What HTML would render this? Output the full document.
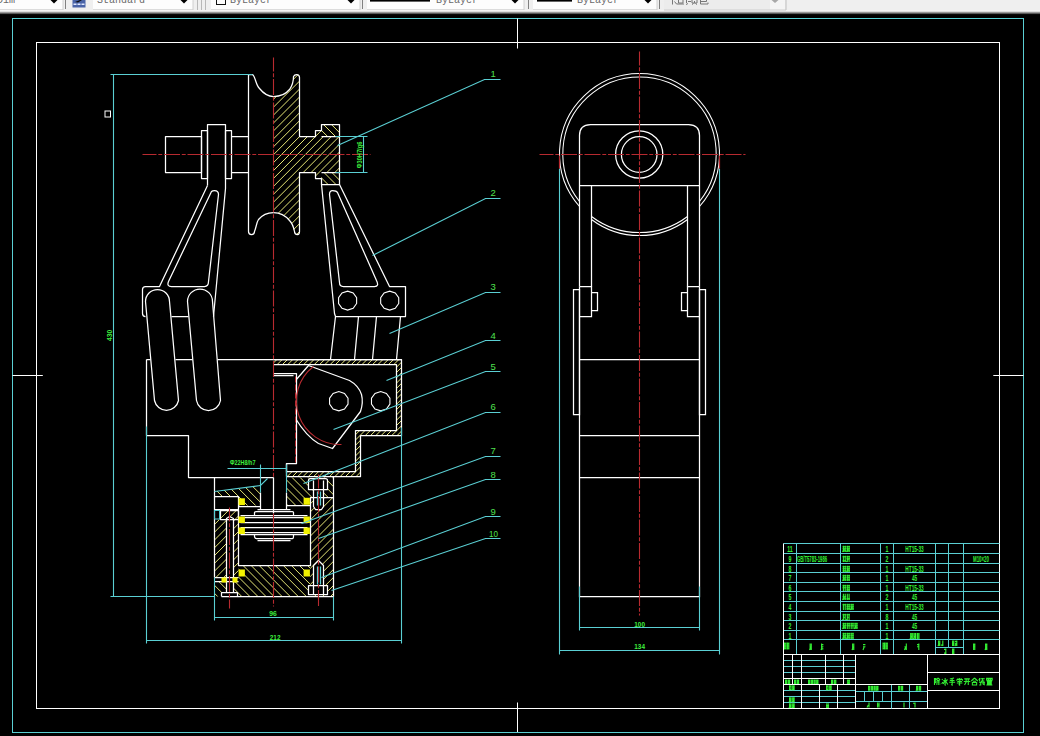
<!DOCTYPE html>
<html><head><meta charset="utf-8"><style>
html,body{margin:0;padding:0;background:#000;width:1040px;height:736px;overflow:hidden}
svg{display:block}
</style></head><body>
<svg width="1040" height="736" viewBox="0 0 1040 736">
<rect width="1040" height="736" fill="#000"/>
<g id="toolbar"><rect x="0" y="0" width="1040" height="14" fill="#efefef"/><rect x="0" y="10.5" width="1040" height="1" fill="#fbfbfb"/><rect x="0" y="11.5" width="1040" height="1" fill="#c8c8c8"/><rect x="0" y="12.5" width="1040" height="1" fill="#5a5a5a"/><rect x="0" y="13.5" width="1040" height="1" fill="#111"/><rect x="0" y="0" width="63" height="9" fill="#fdfdfd"/><line x1="0" y1="9.5" x2="63" y2="9.5" stroke="#dcdcdc" stroke-width="1"/><line x1="63" y1="0" x2="63" y2="10" stroke="#d0d0d0" stroke-width="1"/><path d="M50.5,0 L57.5,0 L54,3.5 Z" fill="#000"/><rect x="93" y="0" width="100" height="9" fill="#fdfdfd"/><line x1="93" y1="9.5" x2="193" y2="9.5" stroke="#dcdcdc" stroke-width="1"/><line x1="193" y1="0" x2="193" y2="10" stroke="#d0d0d0" stroke-width="1"/><path d="M180.5,0 L187.5,0 L184,3.5 Z" fill="#000"/><rect x="211" y="0" width="149" height="9" fill="#fdfdfd"/><line x1="211" y1="9.5" x2="360" y2="9.5" stroke="#dcdcdc" stroke-width="1"/><line x1="360" y1="0" x2="360" y2="10" stroke="#d0d0d0" stroke-width="1"/><path d="M347.5,0 L354.5,0 L351,3.5 Z" fill="#000"/><rect x="367" y="0" width="157" height="9" fill="#fdfdfd"/><line x1="367" y1="9.5" x2="524" y2="9.5" stroke="#dcdcdc" stroke-width="1"/><line x1="524" y1="0" x2="524" y2="10" stroke="#d0d0d0" stroke-width="1"/><path d="M511.5,0 L518.5,0 L515,3.5 Z" fill="#000"/><rect x="533" y="0" width="124" height="9" fill="#fdfdfd"/><line x1="533" y1="9.5" x2="657" y2="9.5" stroke="#dcdcdc" stroke-width="1"/><line x1="657" y1="0" x2="657" y2="10" stroke="#d0d0d0" stroke-width="1"/><path d="M644.5,0 L651.5,0 L648,3.5 Z" fill="#000"/><rect x="664" y="0" width="122" height="10" fill="#ececec"/><rect x="770" y="0" width="15" height="10" fill="#f4f4f4"/><line x1="664" y1="10" x2="786" y2="10" stroke="#cfcfcf"/><line x1="786" y1="0" x2="786" y2="10" stroke="#c0c0c0"/><path d="M771.5,0 L778.5,0 L775,3 Z" fill="#a8a8a8"/><line x1="65.5" y1="0" x2="65.5" y2="9" stroke="#808080" stroke-width="1"/><line x1="362.5" y1="0" x2="362.5" y2="9" stroke="#808080" stroke-width="1"/><line x1="528.5" y1="0" x2="528.5" y2="9" stroke="#808080" stroke-width="1"/><line x1="659.5" y1="0" x2="659.5" y2="9" stroke="#808080" stroke-width="1"/><line x1="197.5" y1="0" x2="197.5" y2="10" stroke="#b8b8b8" stroke-width="1"/><line x1="201.5" y1="0" x2="201.5" y2="10" stroke="#b8b8b8" stroke-width="1"/><line x1="205.5" y1="0" x2="205.5" y2="10" stroke="#b8b8b8" stroke-width="1"/><rect x="72.5" y="0" width="13" height="7.5" fill="#4a64a8"/><rect x="73.5" y="3.5" width="3" height="1.5" fill="#dfe8ff"/><rect x="77.5" y="3.5" width="3" height="1.5" fill="#dfe8ff"/><rect x="81.5" y="3.5" width="3" height="1.5" fill="#dfe8ff"/><path d="M75,2 L80,0 L82,0 L78,2.5Z" fill="#111"/><text x="-3" y="2.8" font-family="Liberation Mono" font-size="10" fill="#6a6a6a">Dim</text><text x="97" y="2.7" font-family="Liberation Mono" font-size="10" fill="#6a6a6a">Standard</text><text x="230" y="3.2" font-family="Liberation Mono" font-size="10" fill="#6a6a6a">ByLayer</text><text x="436" y="3.2" font-family="Liberation Mono" font-size="10" fill="#6a6a6a">ByLayer</text><text x="577" y="3.2" font-family="Liberation Mono" font-size="10" fill="#6a6a6a">ByLayer</text><rect x="216.5" y="-2" width="9" height="6.5" fill="none" stroke="#111" stroke-width="1"/><rect x="370" y="0" width="60" height="1.6" fill="#000"/><rect x="537" y="0" width="35" height="1.6" fill="#000"/><g stroke="#777" stroke-width="1" fill="none"><path d="M672.5,0 V4.5 M674.5,1.5 L676.5,4 H684 M678.5,0 V3 H683 V0 M686.5,0 V3 M688,1.5 H691 M686,4.5 L688,3.5 M692,0 V3 H697 V0 M694.5,1 V3 M692,4.5 L693.5,3.5 M697,4.5 L695.5,3.5 M700.5,0 V4 H708 V2.5 M700.5,1.5 H706.5 V0"/></g></g>
<rect x="12.5" y="18.5" width="1011" height="714" fill="none" stroke="#5acfd3" stroke-width="1"/><rect x="36.5" y="42.5" width="963" height="666" fill="none" stroke="#ffffff" stroke-width="1"/><line x1="517.5" y1="18.5" x2="517.5" y2="48.5" stroke="#ffffff" stroke-width="1"/><line x1="517.5" y1="702.5" x2="517.5" y2="732" stroke="#ffffff" stroke-width="1"/><line x1="12.5" y1="375.5" x2="42.8" y2="375.5" stroke="#ffffff" stroke-width="1"/><line x1="993.3" y1="375.5" x2="1023.5" y2="375.5" stroke="#ffffff" stroke-width="1"/>
<clipPath id="hc1"><path d="M273.3,96.3 C279,96.3 285,94 289,89.5 C292.5,85.5 293,79 293.6,76.5 Q294.3,74.1 296.5,74.1 Q299.4,74.1 299.4,77 L299.4,136 L315.5,136 L315.5,130.3 L321.2,130.3 L321.2,136.3 L339.7,136.3 L339.7,172.4 L321.2,172.4 L321.2,178.4 L315.5,178.4 L315.5,172.4 L299.4,172.4 L299.4,231.5 Q299.4,234.2 297,234.2 Q294.8,234.2 294,231 C293,226 292,223 289.5,220 C285,215 279,212.3 273.3,212.3 Z"/></clipPath>
<path clip-path="url(#hc1)" d="M95.12,238.00L265.12,68.00M103.04,238.00L273.04,68.00M110.96,238.00L280.96,68.00M118.88,238.00L288.88,68.00M126.80,238.00L296.80,68.00M134.72,238.00L304.72,68.00M142.64,238.00L312.64,68.00M150.56,238.00L320.56,68.00M158.48,238.00L328.48,68.00M166.40,238.00L336.40,68.00M174.32,238.00L344.32,68.00M182.24,238.00L352.24,68.00M190.16,238.00L360.16,68.00M198.08,238.00L368.08,68.00M206.00,238.00L376.00,68.00M213.92,238.00L383.92,68.00M221.84,238.00L391.84,68.00M229.76,238.00L399.76,68.00M237.68,238.00L407.68,68.00M245.60,238.00L415.60,68.00M253.51,238.00L423.51,68.00M261.43,238.00L431.43,68.00M269.35,238.00L439.35,68.00M277.27,238.00L447.27,68.00M285.19,238.00L455.19,68.00M293.11,238.00L463.11,68.00M301.03,238.00L471.03,68.00M308.95,238.00L478.95,68.00M316.87,238.00L486.87,68.00M324.79,238.00L494.79,68.00M332.71,238.00L502.71,68.00" stroke="#f2f27c" stroke-width="0.95" fill="none"/>
<clipPath id="hc2"><path d="M321.2,124.4 H339.7 V136.3 H321.2 Z M321.2,172.4 H339.7 V184.4 H321.2 Z"/></clipPath>
<path clip-path="url(#hc2)" d="M245.71,118.00L315.71,188.00M253.63,118.00L323.63,188.00M261.55,118.00L331.55,188.00M269.47,118.00L339.47,188.00M277.39,118.00L347.39,188.00M285.31,118.00L355.31,188.00M293.23,118.00L363.23,188.00M301.15,118.00L371.15,188.00M309.07,118.00L379.07,188.00M316.99,118.00L386.99,188.00M324.91,118.00L394.91,188.00M332.83,118.00L402.83,188.00" stroke="#f2f27c" stroke-width="0.95" fill="none"/>
<clipPath id="hc3"><path d="M273,359.2 L401.9,359.2 L401.9,435.1 L360.4,435.1 L360.4,476.9 L286.3,476.9 L286.3,471.9 L355.1,471.9 L355.1,430.4 L396.6,430.4 L396.6,364.5 L273,364.5 Z"/></clipPath>
<path clip-path="url(#hc3)" d="M138.49,482.00L267.49,353.00M143.79,482.00L272.79,353.00M149.09,482.00L278.09,353.00M154.40,482.00L283.40,353.00M159.70,482.00L288.70,353.00M165.00,482.00L294.00,353.00M170.31,482.00L299.31,353.00M175.61,482.00L304.61,353.00M180.91,482.00L309.91,353.00M186.22,482.00L315.22,353.00M191.52,482.00L320.52,353.00M196.82,482.00L325.82,353.00M202.13,482.00L331.13,353.00M207.43,482.00L336.43,353.00M212.73,482.00L341.73,353.00M218.04,482.00L347.04,353.00M223.34,482.00L352.34,353.00M228.64,482.00L357.64,353.00M233.95,482.00L362.95,353.00M239.25,482.00L368.25,353.00M244.55,482.00L373.55,353.00M249.86,482.00L378.86,353.00M255.16,482.00L384.16,353.00M260.46,482.00L389.46,353.00M265.77,482.00L394.77,353.00M271.07,482.00L400.07,353.00M276.37,482.00L405.37,353.00M281.68,482.00L410.68,353.00M286.98,482.00L415.98,353.00M292.28,482.00L421.28,353.00M297.59,482.00L426.59,353.00M302.89,482.00L431.89,353.00M308.19,482.00L437.19,353.00M313.50,482.00L442.50,353.00M318.80,482.00L447.80,353.00M324.10,482.00L453.10,353.00M329.41,482.00L458.41,353.00M334.71,482.00L463.71,353.00M340.01,482.00L469.01,353.00M345.31,482.00L474.31,353.00M350.62,482.00L479.62,353.00M355.92,482.00L484.92,353.00M361.22,482.00L490.22,353.00M366.53,482.00L495.53,353.00M371.83,482.00L500.83,353.00M377.13,482.00L506.13,353.00M382.44,482.00L511.44,353.00M387.74,482.00L516.74,353.00M393.04,482.00L522.04,353.00M398.35,482.00L527.35,353.00" stroke="#f2f27c" stroke-width="0.95" fill="none"/>
<clipPath id="hc4"><path d="M214.7,491.2 L260,485 L260.6,484.9 L260.6,505.5 L238.6,505.5 L238.6,496.3 L214.7,496.3 Z"/></clipPath>
<path clip-path="url(#hc4)" d="M174.74,473.00L211.74,510.00M182.80,473.00L219.80,510.00M190.86,473.00L227.86,510.00M198.93,473.00L235.93,510.00M206.99,473.00L243.99,510.00M215.05,473.00L252.05,510.00M223.11,473.00L260.11,510.00M231.17,473.00L268.17,510.00M239.23,473.00L276.23,510.00M247.29,473.00L284.29,510.00M255.35,473.00L292.35,510.00M263.41,473.00L300.41,510.00" stroke="#f2f27c" stroke-width="0.95" fill="none"/>
<clipPath id="hc5"><path d="M286.4,477.4 L333.7,477.4 L333.7,497 L310.3,497 L310.3,505.5 L286.3,505.5 Z"/></clipPath>
<path clip-path="url(#hc5)" d="M247.29,473.00L284.29,510.00M255.35,473.00L292.35,510.00M263.41,473.00L300.41,510.00M271.47,473.00L308.47,510.00M279.54,473.00L316.54,510.00M287.60,473.00L324.60,510.00M295.66,473.00L332.66,510.00M303.72,473.00L340.72,510.00M311.78,473.00L348.78,510.00M319.84,473.00L356.84,510.00M327.90,473.00L364.90,510.00" stroke="#f2f27c" stroke-width="0.95" fill="none"/>
<clipPath id="hc6"><path d="M310.3,497 L333.7,497 L333.7,596.4 L310.3,596.4 Z"/></clipPath>
<path clip-path="url(#hc6)" d="M198.04,600.00L305.04,493.00M206.10,600.00L313.10,493.00M214.16,600.00L321.16,493.00M222.22,600.00L329.22,493.00M230.28,600.00L337.28,493.00M238.35,600.00L345.35,493.00M246.41,600.00L353.41,493.00M254.47,600.00L361.47,493.00M262.53,600.00L369.53,493.00M270.59,600.00L377.59,493.00M278.65,600.00L385.65,493.00M286.71,600.00L393.71,493.00M294.77,600.00L401.77,493.00M302.83,600.00L409.83,493.00M310.89,600.00L417.89,493.00M318.96,600.00L425.96,493.00M327.02,600.00L434.02,493.00" stroke="#f2f27c" stroke-width="0.95" fill="none"/>
<clipPath id="hc7"><path d="M238.6,565.3 L310.3,565.3 L310.3,596.4 L238.6,596.4 Z M214.7,581.6 H238.6 V596.4 H214.7 Z"/></clipPath>
<path clip-path="url(#hc7)" d="M174.07,561.00L213.07,600.00M182.13,561.00L221.13,600.00M190.19,561.00L229.19,600.00M198.25,561.00L237.25,600.00M206.32,561.00L245.32,600.00M214.38,561.00L253.38,600.00M222.44,561.00L261.44,600.00M230.50,561.00L269.50,600.00M238.56,561.00L277.56,600.00M246.62,561.00L285.62,600.00M254.68,561.00L293.68,600.00M262.74,561.00L301.74,600.00M270.80,561.00L309.80,600.00M278.86,561.00L317.86,600.00M286.93,561.00L325.93,600.00M294.99,561.00L333.99,600.00M303.05,561.00L342.05,600.00" stroke="#f2f27c" stroke-width="0.95" fill="none"/>
<clipPath id="hc8"><path d="M214.7,519.2 L238.6,519.2 L238.6,577.5 L214.7,577.5 Z M220.9,510.4 H238.3 V519.2 H220.9 Z"/></clipPath>
<path clip-path="url(#hc8)" d="M133.59,582.00L209.59,506.00M141.37,582.00L217.37,506.00M149.15,582.00L225.15,506.00M156.93,582.00L232.93,506.00M164.70,582.00L240.70,506.00M172.48,582.00L248.48,506.00M180.26,582.00L256.26,506.00M188.04,582.00L264.04,506.00M195.82,582.00L271.82,506.00M203.60,582.00L279.60,506.00M211.37,582.00L287.37,506.00M219.15,582.00L295.15,506.00M226.93,582.00L302.93,506.00M234.71,582.00L310.71,506.00" stroke="#f2f27c" stroke-width="0.95" fill="none"/>
<g fill="#000" stroke="none">
<path d="M226.5 592.5V518.5L229.5 516.5L233.5 518.5V592.5ZM221.5 596.5V592.5H237.5V596.5Z"/>
<path d="M308.5 489.5V480.5Q308.5 478.5 310.5 478.5H325.5Q327.5 478.5 327.5 480.5V489.5ZM313.5 489.5V506.5L315.5 509.5H321.5L323.5 506.5V489.5Z"/>
<path d="M313.5 585.5V565.5L318.5 560.5L323.5 565.5V585.5ZM308.5 585.5H327.5V594.5H308.5Z"/>
<path d="M214.5 496.5H238.5V509.5H214.5ZM214.5 510.5H220.5V519.5H214.5Z"/>
</g>
<g fill="none" stroke="#ffffff" stroke-width="1.25" stroke-linejoin="round">
<!-- pulley outline -->
<path d="M248.5 231.5V74.5H252.5C255.5 76.5 255.5 84.5 259.5 88.5C263.5 93.5 268.5 96.5 273.5 96.5C279.5 96.5 285.5 94.5 289.5 89.5C292.5 85.5 293.5 79.5 293.5 76.5Q294.5 74.5 296.5 74.5Q299.5 74.5 299.5 77.5L299.5 136.5L315.5 136.5L315.5 130.5L321.5 130.5L321.5 124.5L339.5 124.5L339.5 184.5L321.5 184.5L321.5 178.5L315.5 178.5L315.5 172.5L299.5 172.5L299.5 231.5Q299.5 234.5 297.5 234.5Q294.5 234.5 294.5 231.5C293.5 226.5 292.5 223.5 289.5 220.5C285.5 215.5 279.5 212.5 273.5 212.5C268.5 212.5 262.5 214.5 258.5 219.5C256.5 222.5 256.5 226.5 254.5 231.5Q254.5 234.5 251.5 234.5Q248.5 234.5 248.5 231.5Z"/>
<path d="M321.5 136.5H339.5M321.5 172.5H339.5"/>
<!-- left shaft -->
<path d="M165.5 136.5H201.5V172.5H165.5Z"/>
<path d="M201.5 130.5H207.5V178.5H201.5Z"/>
<path d="M225.5 130.5H231.5V178.5H225.5Z"/>
<path d="M231.5 136.5H248.5M231.5 172.5H248.5"/>
<!-- left arm -->
<path d="M207.5 185.5V124.5H225.5V188.5L213.5 316.5"/>
<path d="M207.5 185.5L159.5 286.5H145.5Q142.5 286.5 142.5 289.5V313.5Q142.5 316.5 145.5 316.5"/>
<path d="M214.5 190.5Q218.5 190.5 218.5 194.5L208.5 281.5Q208.5 286.5 204.5 286.5H171.5Q166.5 286.5 168.5 281.5L211.5 191.5Q212.5 190.5 214.5 190.5Z"/>
<!-- fingers -->
<path d="M145.5 301.5A12 12 0 0 1 169.5 301.5L178.5 400.5A12.25 12.25 0 0 1 154.5 400.5Z"/>
<path d="M187.5 301.5A12.25 12.25 0 0 1 212.5 301.5L220.5 400.5A12.2 12.2 0 0 1 196.5 400.5Z"/>
<path d="M171.5 316.5H188.5M175.5 359.5H192.5M217.5 359.5H401.5M146.5 359.5H150.5"/>
<!-- body -->
<path d="M146.5 359.5V435.5H188.5V477.5H273.5"/>
<path d="M273.5 373.5H296.5V463.5H286.5V476.5M273.5 375.5H293.5"/>
<!-- right arm -->
<path d="M321.5 184.5L334.5 313.5L335.5 316.5L330.5 359.5"/>
<path d="M339.5 184.5L389.5 286.5H405.5V316.5H335.5"/>
<path d="M332.5 190.5Q336.5 190.5 337.5 192.5L376.5 280.5Q379.5 286.5 374.5 286.5H343.5Q339.5 286.5 339.5 282.5L329.5 194.5Q329.5 190.5 332.5 190.5Z"/>
<path d="M358.5 316.5L354.5 359.5M376.5 316.5L372.5 359.5M400.5 316.5L396.5 359.5"/>
<!-- housing outline -->
<path d="M273.5 359.5L401.5 359.5L401.5 435.5L360.5 435.5L360.5 476.5L286.5 476.5"/>
<path d="M273.5 364.5L396.5 364.5L396.5 430.5L355.5 430.5L355.5 471.5L286.5 471.5"/>
<!-- cam -->
<path d="M308.5 365.5L349.5 380.5Q358.5 385.5 361.5 394.5Q363.5 402.5 360.5 411.5L332.5 448.5L318.5 443.5Q306.5 436.5 295.5 418.5M308.5 365.5L295.5 380.5"/>
<!-- lower housing -->
<path d="M214.5 477.5V577.5M221.5 596.5H333.5V476.5"/>
<path d="M260.5 492.5V509.5M286.5 463.5V472.5M286.5 492.5V509.5"/>
<path d="M214.5 496.5H238.5V565.5H310.5V497.5H333.5"/>
<path d="M214.5 509.5H238.5M220.5 510.5H238.5V519.5H220.5Z"/>
<path d="M238.5 506.5H260.5M286.5 505.5H310.5"/>
<path d="M257.5 509.5H290.5M254.5 515.5V512.5Q254.5 511.5 256.5 511.5H292.5Q293.5 511.5 293.5 512.5V515.5"/>
<path d="M240.5 515.5H307.5M240.5 517.5H307.5M240.5 522.5H307.5M240.5 527.5H307.5M240.5 532.5H307.5M240.5 534.5H307.5"/>
<path d="M254.5 534.5V536.5Q254.5 538.5 256.5 538.5H292.5Q293.5 538.5 293.5 536.5V534.5M257.5 540.5H290.5"/>
<path d="M226.5 592.5V518.5L229.5 516.5L233.5 518.5V592.5M221.5 596.5V592.5H237.5V596.5"/>
<path d="M214.5 577.5H238.5M214.5 581.5H238.5"/>
<path d="M273.5 477.5V513.5"/>
<path d="M308.5 489.5V480.5Q308.5 478.5 310.5 478.5H325.5Q327.5 478.5 327.5 480.5V489.5ZM313.5 480.5V489.5M323.5 480.5V489.5M313.5 489.5V506.5L315.5 509.5H321.5L323.5 506.5V489.5"/>
<path d="M317.5 491.5V505.5M320.5 491.5V505.5" stroke="#5acfd3"/>
<path d="M313.5 585.5V565.5L318.5 560.5L323.5 565.5V585.5M308.5 585.5H327.5V594.5H308.5ZM313.5 585.5V594.5M323.5 585.5V594.5"/>
<path d="M317.5 566.5V584.5M320.5 566.5V584.5" stroke="#5acfd3"/>
</g>
<!-- holes -->
<g fill="none" stroke="#fff" stroke-width="1.1">
<polygon points="356.62,303.53 353.18,308.27 347.60,310.09 342.02,308.27 338.58,303.53 338.58,297.67 342.02,292.93 347.60,291.11 353.18,292.93 356.62,297.67"/>
<polygon points="398.72,303.53 395.28,308.27 389.70,310.09 384.12,308.27 380.68,303.53 380.68,297.67 384.12,292.93 389.70,291.11 395.28,292.93 398.72,297.67"/>
<polygon points="348.02,404.19 344.50,409.04 338.80,410.89 333.10,409.04 329.58,404.19 329.58,398.21 333.10,393.36 338.80,391.51 344.50,393.36 348.02,398.21"/>
<polygon points="389.92,404.19 386.40,409.04 380.70,410.89 375.00,409.04 371.48,404.19 371.48,398.21 375.00,393.36 380.70,391.51 386.40,393.36 389.92,398.21"/>
</g>
<!-- yellow squares -->
<g fill="#f2f200">
<rect x="238.6" y="498.3" width="6.3" height="6.8"/>
<rect x="303.6" y="497.8" width="6.3" height="7"/>
<rect x="238.6" y="516.5" width="6.3" height="6.5"/>
<rect x="303.6" y="516.5" width="6.3" height="6.5"/>
<rect x="238.6" y="527.5" width="6.3" height="6.5"/>
<rect x="303.6" y="527.5" width="6.3" height="6.5"/>
<rect x="238.6" y="569.5" width="6.3" height="7"/>
<rect x="303.6" y="569.5" width="6.3" height="7"/>
<rect x="221.5" y="577.5" width="5" height="5"/>
<rect x="232.5" y="577.5" width="5" height="5"/>
</g>
<!-- red center lines -->
<g stroke="#b82a30" stroke-width="1.1" fill="none" stroke-dasharray="16,1.8,3.9,1.8" stroke-dashoffset="2">
<line x1="273.5" y1="57.5" x2="273.5" y2="477.5"/>
<line x1="273.5" y1="513.5" x2="273.5" y2="606.5"/>
<line x1="142.5" y1="154.5" x2="370.5" y2="154.5"/>
<line x1="229.5" y1="507.5" x2="229.5" y2="608.5"/>
<line x1="318.5" y1="474.5" x2="318.5" y2="606.5"/>
</g>
<path d="M313.5 366.5A43.45 43.45 0 0 0 341.5 444.5" fill="none" stroke="#b82a30" stroke-width="1.1"/>
<line x1="295.5" y1="376.5" x2="295.5" y2="462.5" stroke="#b82a30" stroke-width="1" stroke-dasharray="6,2"/>
<!-- cyan dimensions & leaders -->
<g stroke="#5acfd3" stroke-width="1.1" fill="none">
<path d="M110.5 74.5H252.5M113.5 74.5V596.5M110.5 596.5H214.5"/>
<path d="M146.5 426.5V643.5M401.5 427.5V643.5M146.5 640.5H401.5"/>
<path d="M214.5 577.5V620.5M333.5 596.5V620.5M214.5 617.5H333.5"/>
<path d="M227.5 468.5H286.5M260.5 464.5V492.5M286.5 464.5V492.5"/>
<path d="M214.5 491.5L260.5 485.5L267.5 478.5"/>
<path d="M335.5 136.5H367.5M335.5 172.5H367.5M363.5 136.5V172.5"/>
<path d="M337.5 145.5L484.5 79.5H500.5"/>
<path d="M372.5 255.5L485.5 198.5H500.5"/>
<path d="M389.5 333.5L485.5 292.5H500.5"/>
<path d="M386.5 380.5L485.5 340.5H500.5"/>
<path d="M333.5 429.5L485.5 371.5H500.5"/>
<path d="M303.5 483.5L485.5 412.5H500.5"/>
<path d="M301.5 523.5L485.5 456.5H500.5"/>
<path d="M318.5 538.5L485.5 479.5H500.5"/>
<path d="M321.5 577.5L485.5 516.5H500.5"/>
<path d="M331.5 590.5L485.5 538.5H500.5"/>
</g>
<rect x="214.5" y="510.5" width="5" height="8.5" fill="none" stroke="#5acfd3" stroke-width="1"/>
<rect x="105" y="111" width="5.5" height="6" fill="none" stroke="#fff" stroke-width="1"/>
<!-- green texts -->
<g fill="#4fe04f" font-family="Liberation Sans" font-size="9.5">
<text x="490.5" y="77.3">1</text>
<text x="490.5" y="196.3">2</text>
<text x="490.5" y="290.3">3</text>
<text x="490.5" y="338.6">4</text>
<text x="490.5" y="369.6">5</text>
<text x="490.5" y="410.3">6</text>
<text x="490.5" y="454.3">7</text>
<text x="490.5" y="477.5">8</text>
<text x="490.5" y="514.6">9</text>
<text x="489" y="536.6" transform="translate(489,536.6) scale(0.85,1) translate(-489,-536.6)">10</text>
</g>
<g fill="#3ef03e" font-family="Liberation Sans" font-size="7.5" font-weight="bold">
<text x="269.3" y="616.3" transform="translate(269.3,616.3) scale(0.9,1) translate(-269.3,-616.3)">96</text>
<text x="269.8" y="639.8" transform="translate(269.8,639.8) scale(0.85,1) translate(-269.8,-639.8)">212</text>
<text transform="translate(112.3,341) rotate(-90) scale(0.9,1)">430</text>
</g>
<g fill="#3ef03e" font-family="Liberation Sans" font-size="7" font-weight="bold">
<text x="0" y="0" transform="translate(230,464.8)" font-size="7.8" textLength="25.5" lengthAdjust="spacingAndGlyphs">Φ22H8/h7</text>
<text x="0" y="0" transform="translate(361.9,168.2) rotate(-90)" font-size="8" textLength="26.5" lengthAdjust="spacingAndGlyphs">Φ30H7/g6</text>
</g>

<g fill="none" stroke="#ffffff" stroke-width="1.25">
<!-- outer circles (upper part + sides) -->
<path d="M579.5 206.5A80 80 0 1 1 699.5 206.5" stroke-width="1.05"/>
<path d="M579.5 201.5A76.7 76.7 0 1 1 699.5 201.5" stroke-width="1.05"/>
<!-- lower arcs between arms -->
<path d="M591.5 216.5A79.8 79.8 0 0 0 687.5 216.5" stroke-width="1.05"/>
<path d="M591.5 219.5A79.8 79.8 0 0 0 687.5 219.5" stroke-width="1.05"/>
<!-- cap -->
<path d="M579.5 286.5V135.5Q579.5 124.5 590.5 124.5H688.5Q699.5 124.5 699.5 135.5V286.5"/>
<path d="M579.5 185.5H699.5M591.5 185.5V286.5M687.5 185.5V286.5"/>
<circle cx="639.2" cy="154.5" r="23.6"/>
<circle cx="639.2" cy="154.5" r="17.8"/>
<!-- arm blocks & tabs -->
<path d="M579.5 286.5H591.5V316.5H579.5M591.5 292.5H597.5V310.5H591.5"/>
<path d="M699.5 286.5H687.5V316.5H699.5M687.5 292.5H681.5V310.5H687.5"/>
<path d="M573.5 289.5H579.5V414.5H573.5ZM699.5 289.5H705.5V414.5H699.5Z"/>
<!-- body -->
<path d="M579.5 286.5V596.5H699.5V286.5"/>
<path d="M579.5 359.5H699.5M579.5 435.5H699.5M579.5 477.5H699.5"/>
</g>
<g stroke="#b82a30" stroke-width="1.1" fill="none" stroke-dasharray="16,1.8,3.9,1.8" stroke-dashoffset="2">
<line x1="639.5" y1="51.5" x2="639.5" y2="615.5"/>
<line x1="539.5" y1="154.5" x2="745.5" y2="154.5"/>
</g>
<g stroke="#5acfd3" stroke-width="1.1" fill="none">
<path d="M559.5 168.5V654.5M719.5 168.5V654.5M559.5 650.5H719.5"/>
<path d="M579.5 586.5V630.5M699.5 586.5V630.5M579.5 627.5H699.5"/>
</g>
<path d="M559.5 155.5V168.5M719.5 155.5V168.5" stroke="#b82a30" stroke-width="1.2"/>
<g fill="#3ef03e" font-family="Liberation Sans" font-size="7.5" font-weight="bold">
<text transform="translate(634.3,626.8) scale(0.85,1)">100</text>
<text transform="translate(634.3,649.4) scale(0.85,1)">134</text>
</g>

<g shape-rendering="auto"><line x1="783.5" y1="543.5" x2="999.5" y2="543.5" stroke="#5acfd3" stroke-width="1"/>
<line x1="783.5" y1="553.5" x2="999.5" y2="553.5" stroke="#5acfd3" stroke-width="1"/>
<line x1="783.5" y1="563.5" x2="999.5" y2="563.5" stroke="#5acfd3" stroke-width="1"/>
<line x1="783.5" y1="572.5" x2="999.5" y2="572.5" stroke="#5acfd3" stroke-width="1"/>
<line x1="783.5" y1="582.5" x2="999.5" y2="582.5" stroke="#5acfd3" stroke-width="1"/>
<line x1="783.5" y1="591.5" x2="999.5" y2="591.5" stroke="#5acfd3" stroke-width="1"/>
<line x1="783.5" y1="601.5" x2="999.5" y2="601.5" stroke="#5acfd3" stroke-width="1"/>
<line x1="783.5" y1="611.5" x2="999.5" y2="611.5" stroke="#5acfd3" stroke-width="1"/>
<line x1="783.5" y1="620.5" x2="999.5" y2="620.5" stroke="#5acfd3" stroke-width="1"/>
<line x1="783.5" y1="630.5" x2="999.5" y2="630.5" stroke="#5acfd3" stroke-width="1"/>
<line x1="783.5" y1="639.5" x2="999.5" y2="639.5" stroke="#5acfd3" stroke-width="1"/>
<line x1="796.5" y1="543.5" x2="796.5" y2="654.5" stroke="#5acfd3" stroke-width="1"/>
<line x1="840.5" y1="543.5" x2="840.5" y2="654.5" stroke="#5acfd3" stroke-width="1"/>
<line x1="880.5" y1="543.5" x2="880.5" y2="654.5" stroke="#5acfd3" stroke-width="1"/>
<line x1="893.5" y1="543.5" x2="893.5" y2="654.5" stroke="#5acfd3" stroke-width="1"/>
<line x1="935.5" y1="543.5" x2="935.5" y2="654.5" stroke="#5acfd3" stroke-width="1"/>
<line x1="948.5" y1="543.5" x2="948.5" y2="647.5" stroke="#5acfd3" stroke-width="1"/>
<line x1="963.5" y1="543.5" x2="963.5" y2="654.5" stroke="#5acfd3" stroke-width="1"/>
<line x1="935.5" y1="647.5" x2="963.5" y2="647.5" stroke="#5acfd3" stroke-width="1"/>
<text transform="translate(790,551.5999999999999) scale(0.62,1)" text-anchor="middle" font-family="Liberation Sans" font-size="8.4" font-weight="bold" fill="#33f033">11</text>
<text transform="translate(887,551.5999999999999) scale(0.62,1)" text-anchor="middle" font-family="Liberation Sans" font-size="8.4" font-weight="bold" fill="#33f033">1</text>
<text transform="translate(914.5,551.5999999999999) scale(0.56,1)" text-anchor="middle" font-family="Liberation Sans" font-size="8.4" font-weight="bold" fill="#33f033">HT15-33</text>
<path d="M842.5,546.7h3.6 M842.5,548.8h3.6 M842.5,550.9h3.6 M843.4,545.7v6.2 M845.2,545.7v6.2 M842.5,551.9l1.8,-3.1" stroke="#33f033" stroke-width="1.1" fill="none"/>
<path d="M846.4,546.7h3.6 M846.4,548.8h3.6 M846.4,550.9h3.6 M847.3,545.7v6.2 M849.1,545.7v6.2 M846.4,551.9l1.8,-3.1" stroke="#33f033" stroke-width="1.1" fill="none"/>
<text transform="translate(790,561.5999999999999) scale(0.62,1)" text-anchor="middle" font-family="Liberation Sans" font-size="8.4" font-weight="bold" fill="#33f033">9</text>
<text transform="translate(887,561.5999999999999) scale(0.62,1)" text-anchor="middle" font-family="Liberation Sans" font-size="8.4" font-weight="bold" fill="#33f033">2</text>
<path d="M842.5,556.7h3.6 M842.5,560.9h3.6 M843.4,555.7v6.2 M845.2,555.7v6.2" stroke="#33f033" stroke-width="1.1" fill="none"/>
<path d="M846.4,556.7h3.6 M846.4,558.8h3.6 M847.3,555.7v6.2 M849.1,555.7v6.2 M846.4,561.9l1.8,-3.1" stroke="#33f033" stroke-width="1.1" fill="none"/>
<text transform="translate(790,571.5999999999999) scale(0.62,1)" text-anchor="middle" font-family="Liberation Sans" font-size="8.4" font-weight="bold" fill="#33f033">8</text>
<text transform="translate(887,571.5999999999999) scale(0.62,1)" text-anchor="middle" font-family="Liberation Sans" font-size="8.4" font-weight="bold" fill="#33f033">1</text>
<text transform="translate(914.5,571.5999999999999) scale(0.56,1)" text-anchor="middle" font-family="Liberation Sans" font-size="8.4" font-weight="bold" fill="#33f033">HT15-33</text>
<path d="M842.5,566.7h3.6 M842.5,568.8h3.6 M842.5,570.9h3.6 M843.4,565.7v6.2 M845.2,565.7v6.2" stroke="#33f033" stroke-width="1.1" fill="none"/>
<path d="M846.4,566.7h3.6 M846.4,568.8h3.6 M846.4,570.9h3.6 M847.3,565.7v6.2 M849.1,565.7v6.2 M846.4,571.9l1.8,-3.1" stroke="#33f033" stroke-width="1.1" fill="none"/>
<text transform="translate(790,580.5999999999999) scale(0.62,1)" text-anchor="middle" font-family="Liberation Sans" font-size="8.4" font-weight="bold" fill="#33f033">7</text>
<text transform="translate(887,580.5999999999999) scale(0.62,1)" text-anchor="middle" font-family="Liberation Sans" font-size="8.4" font-weight="bold" fill="#33f033">1</text>
<text transform="translate(914.5,580.5999999999999) scale(0.56,1)" text-anchor="middle" font-family="Liberation Sans" font-size="8.4" font-weight="bold" fill="#33f033">45</text>
<path d="M842.5,575.7h3.6 M842.5,577.8h3.6 M842.5,579.9h3.6 M843.4,574.7v6.2 M845.2,574.7v6.2 M842.5,580.9l1.8,-3.1" stroke="#33f033" stroke-width="1.1" fill="none"/>
<path d="M846.4,575.7h3.6 M846.4,577.8h3.6 M846.4,579.9h3.6 M847.3,574.7v6.2 M849.1,574.7v6.2" stroke="#33f033" stroke-width="1.1" fill="none"/>
<text transform="translate(790,590.5999999999999) scale(0.62,1)" text-anchor="middle" font-family="Liberation Sans" font-size="8.4" font-weight="bold" fill="#33f033">6</text>
<text transform="translate(887,590.5999999999999) scale(0.62,1)" text-anchor="middle" font-family="Liberation Sans" font-size="8.4" font-weight="bold" fill="#33f033">1</text>
<text transform="translate(914.5,590.5999999999999) scale(0.56,1)" text-anchor="middle" font-family="Liberation Sans" font-size="8.4" font-weight="bold" fill="#33f033">HT15-33</text>
<path d="M842.5,585.7h3.6 M842.5,587.8h3.6 M843.4,584.7v6.2 M845.2,584.7v6.2" stroke="#33f033" stroke-width="1.1" fill="none"/>
<path d="M846.4,585.7h3.6 M846.4,587.8h3.6 M846.4,589.9h3.6 M847.3,584.7v6.2 M849.1,584.7v6.2" stroke="#33f033" stroke-width="1.1" fill="none"/>
<text transform="translate(790,599.5999999999999) scale(0.62,1)" text-anchor="middle" font-family="Liberation Sans" font-size="8.4" font-weight="bold" fill="#33f033">5</text>
<text transform="translate(887,599.5999999999999) scale(0.62,1)" text-anchor="middle" font-family="Liberation Sans" font-size="8.4" font-weight="bold" fill="#33f033">2</text>
<text transform="translate(914.5,599.5999999999999) scale(0.56,1)" text-anchor="middle" font-family="Liberation Sans" font-size="8.4" font-weight="bold" fill="#33f033">45</text>
<path d="M842.5,596.8h3.6 M842.5,598.9h3.6 M843.4,593.7v6.2 M845.2,593.7v6.2 M842.5,599.9l1.8,-3.1" stroke="#33f033" stroke-width="1.1" fill="none"/>
<path d="M846.4,598.9h3.6 M847.3,593.7v6.2 M849.1,593.7v6.2" stroke="#33f033" stroke-width="1.1" fill="none"/>
<text transform="translate(790,609.5999999999999) scale(0.62,1)" text-anchor="middle" font-family="Liberation Sans" font-size="8.4" font-weight="bold" fill="#33f033">4</text>
<text transform="translate(887,609.5999999999999) scale(0.62,1)" text-anchor="middle" font-family="Liberation Sans" font-size="8.4" font-weight="bold" fill="#33f033">1</text>
<text transform="translate(914.5,609.5999999999999) scale(0.56,1)" text-anchor="middle" font-family="Liberation Sans" font-size="8.4" font-weight="bold" fill="#33f033">HT15-33</text>
<path d="M842.5,604.7h3.6 M843.4,603.7v6.2 M845.2,603.7v6.2" stroke="#33f033" stroke-width="1.1" fill="none"/>
<path d="M846.4,604.7h3.6 M846.4,606.8h3.6 M846.4,608.9h3.6 M847.3,603.7v6.2 M849.1,603.7v6.2" stroke="#33f033" stroke-width="1.1" fill="none"/>
<path d="M850.3,604.7h3.6 M850.3,606.8h3.6 M850.3,608.9h3.6 M851.2,603.7v6.2 M853.0,603.7v6.2 M850.3,609.9l1.8,-3.1" stroke="#33f033" stroke-width="1.1" fill="none"/>
<text transform="translate(790,619.5999999999999) scale(0.62,1)" text-anchor="middle" font-family="Liberation Sans" font-size="8.4" font-weight="bold" fill="#33f033">3</text>
<text transform="translate(887,619.5999999999999) scale(0.62,1)" text-anchor="middle" font-family="Liberation Sans" font-size="8.4" font-weight="bold" fill="#33f033">8</text>
<text transform="translate(914.5,619.5999999999999) scale(0.56,1)" text-anchor="middle" font-family="Liberation Sans" font-size="8.4" font-weight="bold" fill="#33f033">45</text>
<path d="M842.5,614.7h3.6 M843.4,613.7v6.2 M845.2,613.7v6.2 M842.5,619.9l1.8,-3.1" stroke="#33f033" stroke-width="1.1" fill="none"/>
<path d="M846.4,614.7h3.6 M847.3,613.7v6.2 M849.1,613.7v6.2 M846.4,619.9l1.8,-3.1" stroke="#33f033" stroke-width="1.1" fill="none"/>
<text transform="translate(790,628.5999999999999) scale(0.62,1)" text-anchor="middle" font-family="Liberation Sans" font-size="8.4" font-weight="bold" fill="#33f033">2</text>
<text transform="translate(887,628.5999999999999) scale(0.62,1)" text-anchor="middle" font-family="Liberation Sans" font-size="8.4" font-weight="bold" fill="#33f033">1</text>
<text transform="translate(914.5,628.5999999999999) scale(0.56,1)" text-anchor="middle" font-family="Liberation Sans" font-size="8.4" font-weight="bold" fill="#33f033">45</text>
<path d="M842.5,623.7h3.6 M842.5,625.8h3.6 M842.5,627.9h3.6 M843.4,622.7v6.2 M845.2,622.7v6.2 M842.5,628.9l1.8,-3.1" stroke="#33f033" stroke-width="1.1" fill="none"/>
<path d="M846.4,623.7h3.6 M846.4,625.8h3.6 M847.3,622.7v6.2 M849.1,622.7v6.2" stroke="#33f033" stroke-width="1.1" fill="none"/>
<path d="M850.3,623.7h3.6 M850.3,625.8h3.6 M851.2,622.7v6.2 M853.0,622.7v6.2" stroke="#33f033" stroke-width="1.1" fill="none"/>
<path d="M854.2,623.7h3.6 M854.2,625.8h3.6 M854.2,627.9h3.6 M855.1,622.7v6.2 M856.9,622.7v6.2 M854.2,628.9l1.8,-3.1" stroke="#33f033" stroke-width="1.1" fill="none"/>
<text transform="translate(790,638.5999999999999) scale(0.62,1)" text-anchor="middle" font-family="Liberation Sans" font-size="8.4" font-weight="bold" fill="#33f033">1</text>
<text transform="translate(887,638.5999999999999) scale(0.62,1)" text-anchor="middle" font-family="Liberation Sans" font-size="8.4" font-weight="bold" fill="#33f033">1</text>
<path d="M842.5,633.7h3.6 M842.5,635.8h3.6 M842.5,637.9h3.6 M843.4,632.7v6.2 M845.2,632.7v6.2 M842.5,638.9l1.8,-3.1" stroke="#33f033" stroke-width="1.1" fill="none"/>
<path d="M846.4,633.7h3.6 M846.4,635.8h3.6 M846.4,637.9h3.6 M847.3,632.7v6.2 M849.1,632.7v6.2 M846.4,638.9l1.8,-3.1" stroke="#33f033" stroke-width="1.1" fill="none"/>
<path d="M850.3,633.7h3.6 M850.3,635.8h3.6 M850.3,637.9h3.6 M851.2,632.7v6.2 M853.0,632.7v6.2" stroke="#33f033" stroke-width="1.1" fill="none"/>
<text transform="translate(797,561.5) scale(0.5,1)" text-anchor="start" font-family="Liberation Sans" font-size="8.4" font-weight="bold" fill="#33f033">GB/T5783-1986</text>
<text transform="translate(981,561.5) scale(0.52,1)" text-anchor="middle" font-family="Liberation Sans" font-size="8.4" font-weight="bold" fill="#33f033">M10×20</text>
<path d="M910.0,634.0h3.0 M910.0,636.0h3.0 M910.0,638.0h3.0 M910.8,633.0v6.0 M912.2,633.0v6.0 M910.0,639.0l1.5,-3.0" stroke="#33f033" stroke-width="1.1" fill="none"/>
<path d="M913.3,634.0h3.0 M913.3,636.0h3.0 M913.3,638.0h3.0 M914.0,633.0v6.0 M915.5,633.0v6.0 M913.3,639.0l1.5,-3.0" stroke="#33f033" stroke-width="1.1" fill="none"/>
<path d="M916.6,634.0h3.0 M916.6,636.0h3.0 M916.6,638.0h3.0 M917.4,633.0v6.0 M918.9,633.0v6.0" stroke="#33f033" stroke-width="1.1" fill="none"/>
<path d="M784.0,643.7h2.6 M784.0,646.0h2.6 M784.0,648.3h2.6 M784.6,642.5v7.0 M786.0,642.5v7.0" stroke="#33f033" stroke-width="1.1" fill="none"/>
<path d="M786.8,643.7h2.6 M786.8,646.0h2.6 M786.8,648.3h2.6 M787.4,642.5v7.0 M788.8,642.5v7.0" stroke="#33f033" stroke-width="1.1" fill="none"/>
<path d="M809.5,648.9h2.4 M810.1,643.5v6.5 M811.3,643.5v6.5 M809.5,650.0l1.2,-3.2" stroke="#33f033" stroke-width="1.1" fill="none"/>
<path d="M821.0,644.6h2.4 M821.0,646.8h2.4 M821.0,648.9h2.4 M821.6,643.5v6.5 M821.0,650.0l1.2,-3.2" stroke="#33f033" stroke-width="1.1" fill="none"/>
<path d="M852.6,643.5v6.5 M853.8,643.5v6.5 M852.0,650.0l1.2,-3.2" stroke="#33f033" stroke-width="1.1" fill="none"/>
<path d="M863.0,644.6h2.4 M863.0,646.8h2.4 M863.0,650.0l1.2,-3.2" stroke="#33f033" stroke-width="1.1" fill="none"/>
<path d="M882.5,643.7h2.6 M882.5,646.0h2.6 M882.5,648.3h2.6 M883.1,642.5v7.0 M884.5,642.5v7.0" stroke="#33f033" stroke-width="1.1" fill="none"/>
<path d="M885.3,643.7h2.6 M885.3,646.0h2.6 M885.3,648.3h2.6 M885.9,642.5v7.0 M887.2,642.5v7.0" stroke="#33f033" stroke-width="1.1" fill="none"/>
<path d="M904.5,646.8h2.4 M904.5,648.9h2.4 M906.3,643.5v6.5 M904.5,650.0l1.2,-3.2" stroke="#33f033" stroke-width="1.1" fill="none"/>
<path d="M917.0,644.6h2.4 M917.0,646.8h2.4 M918.8,643.5v6.5" stroke="#33f033" stroke-width="1.1" fill="none"/>
<path d="M938.0,645.1h2.4 M938.6,640.5v5.5 M939.8,640.5v5.5 M938.0,646.0l1.2,-2.8" stroke="#33f033" stroke-width="1.1" fill="none"/>
<path d="M941.0,645.1h2.4 M942.8,640.5v5.5" stroke="#33f033" stroke-width="1.1" fill="none"/>
<path d="M952.0,643.2h2.4 M952.0,645.1h2.4 M952.6,640.5v5.5 M953.8,640.5v5.5" stroke="#33f033" stroke-width="1.1" fill="none"/>
<path d="M955.0,641.4h2.4 M955.0,643.2h2.4 M955.0,645.1h2.4 M956.8,640.5v5.5 M955.0,646.0l1.2,-2.8" stroke="#33f033" stroke-width="1.1" fill="none"/>
<path d="M944.0,649.4h2.4 M944.0,653.1h2.4 M945.8,648.5v5.5" stroke="#33f033" stroke-width="1.1" fill="none"/>
<path d="M952.0,649.4h2.4 M952.0,651.2h2.4 M952.0,653.1h2.4 M952.6,648.5v5.5 M953.8,648.5v5.5" stroke="#33f033" stroke-width="1.1" fill="none"/>
<path d="M973.0,644.6h2.4 M973.0,646.8h2.4 M973.6,643.5v6.5 M974.8,643.5v6.5" stroke="#33f033" stroke-width="1.1" fill="none"/>
<path d="M985.0,644.6h2.4 M985.0,648.9h2.4 M985.6,643.5v6.5 M986.8,643.5v6.5 M985.0,650.0l1.2,-3.2" stroke="#33f033" stroke-width="1.1" fill="none"/>
<line x1="783.5" y1="660.5" x2="855.5" y2="660.5" stroke="#5acfd3" stroke-width="1"/>
<line x1="783.5" y1="666.5" x2="855.5" y2="666.5" stroke="#5acfd3" stroke-width="1"/>
<line x1="783.5" y1="672.5" x2="855.5" y2="672.5" stroke="#5acfd3" stroke-width="1"/>
<line x1="783.5" y1="690.5" x2="855.5" y2="690.5" stroke="#5acfd3" stroke-width="1"/>
<line x1="783.5" y1="696.5" x2="855.5" y2="696.5" stroke="#5acfd3" stroke-width="1"/>
<line x1="783.5" y1="702.5" x2="855.5" y2="702.5" stroke="#5acfd3" stroke-width="1"/>
<line x1="891.5" y1="684.5" x2="891.5" y2="708.5" stroke="#5acfd3" stroke-width="1"/>
<line x1="909.5" y1="684.5" x2="909.5" y2="708.5" stroke="#5acfd3" stroke-width="1"/>
<line x1="855.5" y1="691.5" x2="927.5" y2="691.5" stroke="#5acfd3" stroke-width="1"/>
<line x1="855.5" y1="701.5" x2="927.5" y2="701.5" stroke="#5acfd3" stroke-width="1"/>
<line x1="864.5" y1="691.5" x2="864.5" y2="701.5" stroke="#5acfd3" stroke-width="1"/>
<line x1="873.5" y1="691.5" x2="873.5" y2="701.5" stroke="#5acfd3" stroke-width="1"/>
<line x1="882.5" y1="691.5" x2="882.5" y2="701.5" stroke="#5acfd3" stroke-width="1"/>
<path d="M785.0,680.3h2.4 M785.0,682.0h2.4 M785.0,683.7h2.4 M785.6,679.5v5.0 M786.8,679.5v5.0 M785.0,684.5l1.2,-2.5" stroke="#33f033" stroke-width="1.1" fill="none"/>
<path d="M787.8,680.3h2.4 M787.8,682.0h2.4 M787.8,683.7h2.4 M788.4,679.5v5.0 M789.6,679.5v5.0" stroke="#33f033" stroke-width="1.1" fill="none"/>
<path d="M794.0,680.3h2.4 M794.0,682.0h2.4 M794.0,683.7h2.4 M794.6,679.5v5.0 M795.8,679.5v5.0 M794.0,684.5l1.2,-2.5" stroke="#33f033" stroke-width="1.1" fill="none"/>
<path d="M796.8,680.3h2.4 M796.8,682.0h2.4 M796.8,683.7h2.4 M797.4,679.5v5.0 M798.6,679.5v5.0 M796.8,684.5l1.2,-2.5" stroke="#33f033" stroke-width="1.1" fill="none"/>
<path d="M808.0,680.3h2.4 M808.0,682.0h2.4 M808.0,683.7h2.4 M808.6,679.5v5.0 M809.8,679.5v5.0" stroke="#33f033" stroke-width="1.1" fill="none"/>
<path d="M810.7,680.3h2.4 M810.7,682.0h2.4 M810.7,683.7h2.4 M811.3,679.5v5.0 M812.5,679.5v5.0" stroke="#33f033" stroke-width="1.1" fill="none"/>
<path d="M813.4,680.3h2.4 M813.4,683.7h2.4 M814.0,679.5v5.0 M815.2,679.5v5.0" stroke="#33f033" stroke-width="1.1" fill="none"/>
<path d="M816.1,680.3h2.4 M816.1,682.0h2.4 M816.1,683.7h2.4 M816.7,679.5v5.0 M817.9,679.5v5.0 M816.1,684.5l1.2,-2.5" stroke="#33f033" stroke-width="1.1" fill="none"/>
<path d="M831.0,680.3h2.4 M831.0,682.0h2.4 M831.0,683.7h2.4 M831.6,679.5v5.0 M832.8,679.5v5.0 M831.0,684.5l1.2,-2.5" stroke="#33f033" stroke-width="1.1" fill="none"/>
<path d="M834.0,680.3h2.4 M834.0,682.0h2.4 M834.0,683.7h2.4 M834.6,679.5v5.0 M835.8,679.5v5.0" stroke="#33f033" stroke-width="1.1" fill="none"/>
<path d="M847.0,680.3h3.0 M847.0,682.0h3.0 M847.0,683.7h3.0 M847.8,679.5v5.0 M849.2,679.5v5.0 M847.0,684.5l1.5,-2.5" stroke="#33f033" stroke-width="1.1" fill="none"/>
<path d="M789.0,686.1h2.6 M789.0,689.5h2.6 M789.6,685.3v5.0 M791.0,685.3v5.0" stroke="#33f033" stroke-width="1.1" fill="none"/>
<path d="M792.1,686.1h2.6 M792.1,687.8h2.6 M792.1,689.5h2.6 M792.8,685.3v5.0 M794.1,685.3v5.0 M792.1,690.3l1.3,-2.5" stroke="#33f033" stroke-width="1.1" fill="none"/>
<path d="M826.0,686.1h2.6 M826.0,689.5h2.6 M826.6,685.3v5.0 M828.0,685.3v5.0" stroke="#33f033" stroke-width="1.1" fill="none"/>
<path d="M829.1,686.1h2.6 M829.1,687.8h2.6 M829.1,689.5h2.6 M829.8,685.3v5.0 M831.1,685.3v5.0" stroke="#33f033" stroke-width="1.1" fill="none"/>
<path d="M789.0,698.1h2.6 M789.0,699.8h2.6 M789.0,701.5h2.6 M789.6,697.3v5.0 M791.0,697.3v5.0 M789.0,702.3l1.3,-2.5" stroke="#33f033" stroke-width="1.1" fill="none"/>
<path d="M792.1,698.1h2.6 M792.1,699.8h2.6 M792.1,701.5h2.6 M792.8,697.3v5.0 M794.1,697.3v5.0 M792.1,702.3l1.3,-2.5" stroke="#33f033" stroke-width="1.1" fill="none"/>
<path d="M789.0,704.0h2.6 M789.0,705.6h2.6 M789.0,707.2h2.6 M789.6,703.2v4.8 M791.0,703.2v4.8 M789.0,708.0l1.3,-2.4" stroke="#33f033" stroke-width="1.1" fill="none"/>
<path d="M792.1,704.0h2.6 M792.1,705.6h2.6 M792.1,707.2h2.6 M792.8,703.2v4.8 M794.1,703.2v4.8 M792.1,708.0l1.3,-2.4" stroke="#33f033" stroke-width="1.1" fill="none"/>
<path d="M826.0,705.6h3.0 M826.0,707.2h3.0 M826.8,703.2v4.8 M828.2,703.2v4.8" stroke="#33f033" stroke-width="1.1" fill="none"/>
<path d="M868.0,686.6h2.4 M868.0,690.0h2.4 M868.6,685.8v5.0 M869.8,685.8v5.0" stroke="#33f033" stroke-width="1.1" fill="none"/>
<path d="M870.7,686.6h2.4 M870.7,688.3h2.4 M870.7,690.0h2.4 M871.3,685.8v5.0 M872.5,685.8v5.0" stroke="#33f033" stroke-width="1.1" fill="none"/>
<path d="M873.4,686.6h2.4 M873.4,688.3h2.4 M873.4,690.0h2.4 M874.0,685.8v5.0 M875.2,685.8v5.0" stroke="#33f033" stroke-width="1.1" fill="none"/>
<path d="M876.1,686.6h2.4 M876.1,688.3h2.4 M876.1,690.0h2.4 M876.7,685.8v5.0 M877.9,685.8v5.0 M876.1,690.8l1.2,-2.5" stroke="#33f033" stroke-width="1.1" fill="none"/>
<path d="M898.0,686.6h2.4 M898.6,685.8v5.0 M899.8,685.8v5.0" stroke="#33f033" stroke-width="1.1" fill="none"/>
<path d="M900.8,686.6h2.4 M900.8,688.3h2.4 M900.8,690.0h2.4 M901.4,685.8v5.0 M902.6,685.8v5.0" stroke="#33f033" stroke-width="1.1" fill="none"/>
<path d="M916.0,686.6h2.4 M916.0,688.3h2.4 M916.0,690.0h2.4 M916.6,685.8v5.0 M917.8,685.8v5.0 M916.0,690.8l1.2,-2.5" stroke="#33f033" stroke-width="1.1" fill="none"/>
<path d="M918.8,686.6h2.4 M918.8,688.3h2.4 M918.8,690.0h2.4 M919.4,685.8v5.0 M920.6,685.8v5.0" stroke="#33f033" stroke-width="1.1" fill="none"/>
<path d="M869.0,702.5v5.0 M867.0,707.5l1.3,-2.5" stroke="#33f033" stroke-width="1.1" fill="none"/>
<path d="M877.0,705.0h2.6 M877.6,702.5v5.0 M879.0,702.5v5.0" stroke="#33f033" stroke-width="1.1" fill="none"/>
<path d="M904.0,702.5v5.0" stroke="#33f033" stroke-width="1.1" fill="none"/>
<path d="M913.0,703.3h2.6 M915.0,702.5v5.0" stroke="#33f033" stroke-width="1.1" fill="none"/>
<path transform="translate(934.00,678) scale(0.93,1)" d="M0.5,0 V7 M0.5,0.5 H2 L1.2,2.5 L2.2,4 L0.8,5 M4.5,0 L2.5,2 M4.5,0 L6.5,2 M3,2.5 H6 M2.5,4 H6.5 M4.5,2.5 V7 M3,5.5 L2.5,6.5 M6,5.5 L6.5,6.5" stroke="#33f033" stroke-width="1.15" fill="none"/>
<path transform="translate(941.45,678) scale(0.93,1)" d="M0.5,1 L1.3,2 M0.3,6 L1.5,4 M4,0 V7 L3.2,6.5 M2,2.5 H3.5 L2,6 M6.5,1.5 L4.5,3.5 M4.5,3 L6.8,6.5" stroke="#33f033" stroke-width="1.15" fill="none"/>
<path transform="translate(948.90,678) scale(0.93,1)" d="M5.5,0 L1,1 M1,2.5 H6 M0.3,4.2 H6.7 M3.5,1 V7 L2.5,6.5" stroke="#33f033" stroke-width="1.15" fill="none"/>
<path transform="translate(956.35,678) scale(0.93,1)" d="M3.5,0 V1.5 M1.5,0.3 L2,1.2 M5.5,0.3 L5,1.2 M0.5,1.5 H6.5 V2.8 M0.5,1.5 V2.8 M2.5,2.2 H4.5 M1,3.5 H6 M0.5,5 H6.5 M3.5,3.5 V7 L2.5,6.5" stroke="#33f033" stroke-width="1.15" fill="none"/>
<path transform="translate(963.80,678) scale(0.93,1)" d="M0.5,0.8 H6.5 M0,3.5 H7 M2.5,0.8 V4 L0.8,7 M4.8,0.8 V7" stroke="#33f033" stroke-width="1.15" fill="none"/>
<path transform="translate(971.25,678) scale(0.93,1)" d="M3.5,0 L0,3 M3.5,0 L7,3 M1.8,3.2 H5.2 M1.2,4.5 H5.8 V7 H1.2 Z" stroke="#33f033" stroke-width="1.15" fill="none"/>
<path transform="translate(978.70,678) scale(0.93,1)" d="M1,0 V3.3 M0,1.2 L1,2 M2,0.7 H6.5 M4.2,0 V3 M2.5,3 H6 M0.3,4.2 H6.7 M3.5,3.3 L1.5,5 M2.2,4.8 V7 L0.5,7 M4,5.5 L6.5,7 M5,4.5 L6.5,5.5" stroke="#33f033" stroke-width="1.15" fill="none"/>
<path transform="translate(986.15,678) scale(0.93,1)" d="M0.5,0.3 H6.5 V2 H0.5 Z M2.5,0.3 V2 M4.5,0.3 V2 M0.5,2.8 H6.5 M3.5,2 V3 M1.5,3.5 H5.5 V6.5 H1.5 Z M1.5,4.5 H5.5 M1.5,5.5 H5.5 M0.3,7 H6.7" stroke="#33f033" stroke-width="1.15" fill="none"/>
<line x1="783.5" y1="543.5" x2="783.5" y2="708.5" stroke="#ffffff" stroke-width="1"/>
<line x1="783.5" y1="654.5" x2="999.5" y2="654.5" stroke="#ffffff" stroke-width="1"/>
<line x1="855.5" y1="654.5" x2="855.5" y2="708.5" stroke="#ffffff" stroke-width="1"/>
<line x1="927.5" y1="654.5" x2="927.5" y2="708.5" stroke="#ffffff" stroke-width="1"/>
<line x1="927.5" y1="672.5" x2="999.5" y2="672.5" stroke="#ffffff" stroke-width="1"/>
<line x1="927.5" y1="690.5" x2="999.5" y2="690.5" stroke="#ffffff" stroke-width="1"/>
<line x1="792.5" y1="654.5" x2="792.5" y2="684.5" stroke="#ffffff" stroke-width="1"/>
<line x1="801.5" y1="654.5" x2="801.5" y2="684.5" stroke="#ffffff" stroke-width="1"/>
<line x1="825.5" y1="654.5" x2="825.5" y2="684.5" stroke="#ffffff" stroke-width="1"/>
<line x1="843.5" y1="654.5" x2="843.5" y2="684.5" stroke="#ffffff" stroke-width="1"/>
<line x1="783.5" y1="678.5" x2="855.5" y2="678.5" stroke="#ffffff" stroke-width="1"/>
<line x1="783.5" y1="684.5" x2="855.5" y2="684.5" stroke="#ffffff" stroke-width="1"/>
<line x1="801.5" y1="684.5" x2="801.5" y2="708.5" stroke="#ffffff" stroke-width="1"/>
<line x1="819.5" y1="684.5" x2="819.5" y2="708.5" stroke="#ffffff" stroke-width="1"/>
<line x1="837.5" y1="684.5" x2="837.5" y2="708.5" stroke="#ffffff" stroke-width="1"/>
<line x1="855.5" y1="684.5" x2="927.5" y2="684.5" stroke="#ffffff" stroke-width="1"/></g>
</svg></body></html>
